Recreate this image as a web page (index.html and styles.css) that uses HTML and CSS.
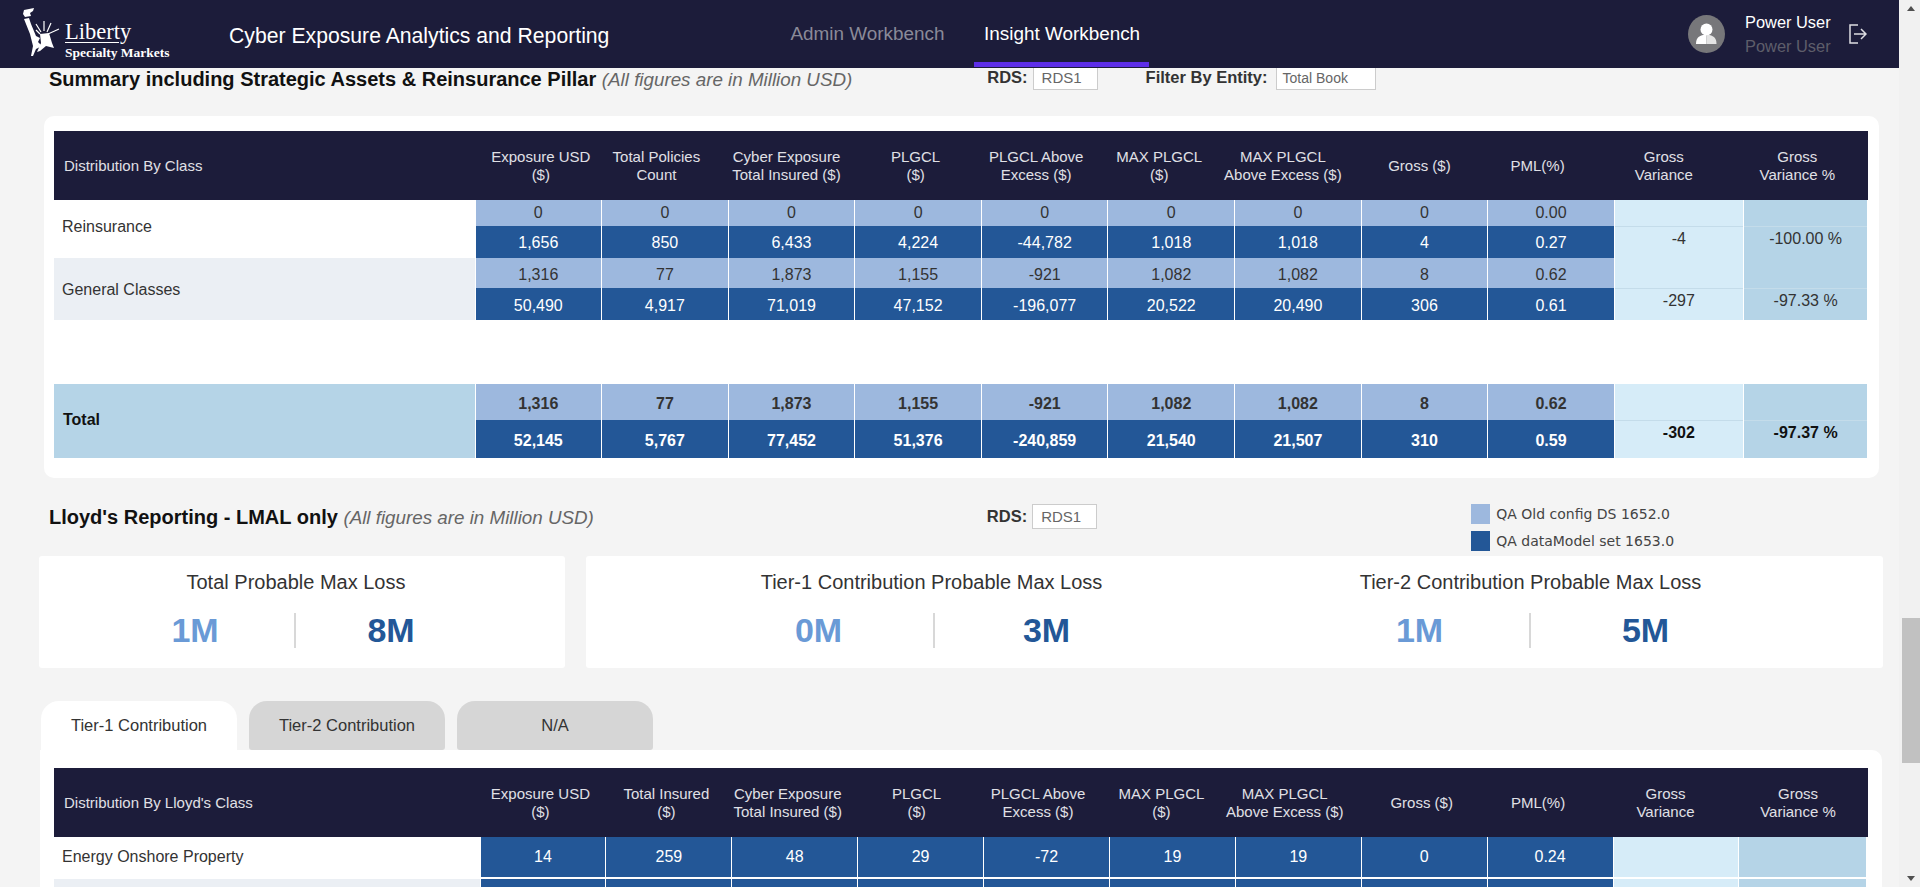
FILE: index.html
```html
<!doctype html>
<html lang="en">
  <head>
    <meta charset="UTF-8" />
    <meta name="viewport" content="width=device-width, initial-scale=1.0" />
    <link rel="stylesheet" href="styles.css">
    <title>Cyber Exposure Analytics and Reporting</title>
  </head>
  <body>
    <div class="shell">
      <div class="page">
        <header class="topbar">
          <div class="logo">
            <svg class="logo-statue" viewBox="0 0 38 50" width="38" height="50">
              <path fill="#fff" d="M2 2L12 0L11 3L8 5L9 8L3 9L1 6Z"/>
              <path fill="#fff" d="M2 11L7 10L9 16L14 28L18 30L16 34L20 38L14 41L11 48L9 48L11 38L8 26Z"/>
              <path fill="#fff" d="M18 26L27 25L30 35L32 40L24 38L18 43L15 44L19 35Z"/>
              <path stroke="#fff" stroke-width="1.2" d="M22 23L22 13M19 24L14 16M25 24L29 15M26 26L37 21M18 26L14 22"/>
            </svg>
            <div class="logo-words">
              <span class="logo-name">Liberty</span>
              <span class="logo-sub">Specialty Markets</span>
            </div>
          </div>
          <div class="app-title">Cyber Exposure Analytics and Reporting</div>
          <nav class="nav">
            <a class="nav-item">Admin Workbench</a>
            <a class="nav-item active">Insight Workbench</a>
          </nav>
          <div class="user">
            <span class="avatar">
              <svg viewBox="0 0 37 38" width="37" height="38">
                <circle cx="18.500" cy="14.500" r="6" fill="#fff"/>
                <path fill="#fff" d="M8 29c0-5 2-8 7-9h3.500v9z"/>
                <path fill="#e4e4e4" d="M28.500 29c0-5-2-8-7-9h-3v9z"/>
              </svg>
            </span>
            <div class="user-names">
              <span class="user-name">Power User</span>
              <span class="user-role">Power User</span>
            </div>
            <svg class="logout" viewBox="0 0 18 20" width="18" height="20" fill="none" stroke="#dddde2" stroke-width="1.500">
              <path d="M9 1H1v18h8"/>
              <path d="M5 10h12M12 5l5 5-5 5"/>
            </svg>
          </div>
        </header>

        <main class="content">
          <section class="title-row first">
            <h2 class="heading">Summary including Strategic Assets &amp; Reinsurance Pillar <em>(All figures are in Million USD)</em></h2>
            <div class="filter rds-filter"><b>RDS:</b><span class="box rds-box">RDS1</span></div>
            <div class="filter entity-filter"><b>Filter By Entity:</b><span class="box entity-box">Total Book</span></div>
          </section>

          <section class="card summary-card">
            <table class="grid summary">
              <colgroup>
                <col class="c-label"><col span="9" class="c-num"><col class="c-var"><col class="c-varp">
              </colgroup>
              <thead>
                <tr>
                  <th>Distribution By Class</th>
                  <th><span>Exposure USD<br>($)</span></th><th><span>Total Policies<br>Count</span></th><th><span>Cyber Exposure<br>Total Insured ($)</span></th><th><span>PLGCL<br>($)</span></th>
                  <th><span>PLGCL Above<br>Excess ($)</span></th><th><span>MAX PLGCL<br>($)</span></th><th><span>MAX PLGCL<br>Above Excess ($)</span></th><th><span>Gross ($)</span></th><th><span>PML(%)</span></th>
                  <th><span>Gross<br>Variance</span></th><th><span>Gross<br>Variance %</span></th>
                </tr>
              </thead>
              <tbody>
                <tr class="old">
                  <td rowspan="2" class="label">Reinsurance</td>
                  <td>0</td><td>0</td><td>0</td><td>0</td><td>0</td><td>0</td><td>0</td><td>0</td><td>0.00</td>
                  <td class="var"></td><td class="varp"></td>
                </tr>
                <tr class="new">
                  <td>1,656</td><td>850</td><td>6,433</td><td>4,224</td><td>-44,782</td><td>1,018</td><td>1,018</td><td>4</td><td>0.27</td>
                  <td class="var">-4</td><td class="varp">-100.00 %</td>
                </tr>
                <tr class="old tall">
                  <td rowspan="2" class="label alt">General Classes</td>
                  <td>1,316</td><td>77</td><td>1,873</td><td>1,155</td><td>-921</td><td>1,082</td><td>1,082</td><td>8</td><td>0.62</td>
                  <td class="var"></td><td class="varp"></td>
                </tr>
                <tr class="new low">
                  <td>50,490</td><td>4,917</td><td>71,019</td><td>47,152</td><td>-196,077</td><td>20,522</td><td>20,490</td><td>306</td><td>0.61</td>
                  <td class="var">-297</td><td class="varp">-97.33 %</td>
                </tr>
                <tr class="spacer"><td colspan="12"></td></tr>
                <tr class="old total">
                  <td rowspan="2" class="label total-label">Total</td>
                  <td>1,316</td><td>77</td><td>1,873</td><td>1,155</td><td>-921</td><td>1,082</td><td>1,082</td><td>8</td><td>0.62</td>
                  <td class="var"></td><td class="varp"></td>
                </tr>
                <tr class="new total">
                  <td>52,145</td><td>5,767</td><td>77,452</td><td>51,376</td><td>-240,859</td><td>21,540</td><td>21,507</td><td>310</td><td>0.59</td>
                  <td class="var">-302</td><td class="varp">-97.37 %</td>
                </tr>
              </tbody>
            </table>
          </section>

          <section class="title-row second">
            <h2 class="heading">Lloyd's Reporting - LMAL only <em>(All figures are in Million USD)</em></h2>
            <div class="filter rds-filter-two"><b>RDS:</b><span class="box rds-box">RDS1</span></div>
            <div class="legend">
              <div class="legend-item"><i class="swatch light"></i>QA Old config DS 1652.0</div>
              <div class="legend-item"><i class="swatch dark"></i>QA dataModel set 1653.0</div>
            </div>
          </section>

          <section class="kpis">
            <div class="kpi-card kpi-total">
              <div class="kpi">
                <div class="kpi-title">Total Probable Max Loss</div>
                <div class="kpi-values"><span class="v-old">1M</span><span class="v-new">8M</span></div>
              </div>
            </div>
            <div class="kpi-card kpi-tiers">
              <div class="kpi tier-one">
                <div class="kpi-title">Tier-1 Contribution Probable Max Loss</div>
                <div class="kpi-values"><span class="v-old">0M</span><span class="v-new">3M</span></div>
              </div>
              <div class="kpi tier-two">
                <div class="kpi-title">Tier-2 Contribution Probable Max Loss</div>
                <div class="kpi-values"><span class="v-old">1M</span><span class="v-new">5M</span></div>
              </div>
            </div>
          </section>

          <div class="tabs">
            <div class="tab active">Tier-1 Contribution</div>
            <div class="tab">Tier-2 Contribution</div>
            <div class="tab">N/A</div>
          </div>

          <section class="card lloyds-card">
            <table class="grid lloyds">
              <colgroup>
                <col class="c-label"><col span="9" class="c-num"><col class="c-var"><col class="c-varp">
              </colgroup>
              <thead>
                <tr>
                  <th>Distribution By Lloyd's Class</th>
                  <th><span>Exposure USD<br>($)</span></th><th><span>Total Insured<br>($)</span></th><th><span>Cyber Exposure<br>Total Insured ($)</span></th><th><span>PLGCL<br>($)</span></th>
                  <th><span>PLGCL Above<br>Excess ($)</span></th><th><span>MAX PLGCL<br>($)</span></th><th><span>MAX PLGCL<br>Above Excess ($)</span></th><th><span>Gross ($)</span></th><th><span>PML(%)</span></th>
                  <th><span>Gross<br>Variance</span></th><th><span>Gross<br>Variance %</span></th>
                </tr>
              </thead>
              <tbody>
                <tr class="new single">
                  <td class="label">Energy Onshore Property</td>
                  <td>14</td><td>259</td><td>48</td><td>29</td><td>-72</td><td>19</td><td>19</td><td>0</td><td>0.24</td>
                  <td class="var"></td><td class="varp"></td>
                </tr>
                <tr class="new single">
                  <td class="label alt"></td>
                  <td></td><td></td><td></td><td></td><td></td><td></td><td></td><td></td><td></td>
                  <td class="var"></td><td class="varp"></td>
                </tr>
              </tbody>
            </table>
          </section>
        </main>
      </div>

      <div class="scrollbar">
        <span class="arrow up"></span>
        <div class="track"><div class="thumb"></div></div>
        <span class="arrow down"></span>
      </div>
    </div>
  </body>
</html>
```
FILE: styles.css
```css
* {
  box-sizing: border-box;
}

html, body {
  height: 100%;
  margin: 0;
  overflow: hidden;
}

body {
  font-family: "Liberation Sans", Arial, sans-serif;
  background: #f4f4f4;
  color: #222;
}

.shell {
  display: flex;
  height: 887px;
}

.page {
  width: 1899px;
  height: 887px;
  overflow: hidden;
  flex: none;
  display: flex;
  flex-direction: column;
}

/* top bar */
.topbar {
  flex: none;
  height: 68px;
  background: #1c1c3a;
  display: flex;
  align-items: center;
  color: #fff;
  position: relative;
  z-index: 2;
}

.logo {
  width: 229px;
  height: 68px;
  padding-left: 22px;
  display: flex;
  align-items: flex-start;
  flex: none;
}

.logo-statue {
  flex: none;
  margin: 8px 5px 0 0;
}

.logo-words {
  display: flex;
  flex-direction: column;
  font-family: "Liberation Serif", serif;
  margin-top: 22px;
}

.logo-name {
  font-size: 22.5px;
  line-height: 19px;
  border-bottom: 1px solid #fff;
  width: 54px;
  padding-bottom: 1px;
  white-space: nowrap;
}

.logo-sub {
  font-size: 13.5px;
  font-weight: bold;
  line-height: 18px;
  padding-top: 1px;
  white-space: nowrap;
}

.app-title {
  font-size: 21.2px;
  width: 551px;
  flex: none;
  padding-top: 3px;
}

.nav {
  display: flex;
  align-self: stretch;
  flex: none;
  width: 908px;
}

.nav-item {
  font-size: 18.9px;
  color: #8a8a98;
  padding: 0 10px;
  margin-right: 19px;
  height: 67px;
  line-height: 68px;
  width: 175px;
  text-align: center;
  white-space: nowrap;
}

.nav-item.active {
  color: #fff;
  border-bottom: 5px solid #5d2ee8;
}

.user {
  display: flex;
  align-items: center;
}

.avatar {
  width: 37px;
  height: 38px;
  background: #77777a;
  border-radius: 50%;
  margin-right: 20px;
  overflow: hidden;
}

.avatar svg {
  display: block;
}

.user-names {
  display: flex;
  flex-direction: column;
  font-size: 16.4px;
  line-height: 24px;
}

.user-role {
  color: #5e5e6a;
}

.logout {
  margin-left: 18px;
}

/* scrollbar strip */
.scrollbar {
  flex: 1;
  background: #f1f1f1;
  display: flex;
  flex-direction: column;
  align-items: flex-end;
}

.arrow {
  width: 18px;
  height: 17px;
  display: flex;
  align-items: center;
  justify-content: center;
}

.arrow::before {
  content: "";
  border-left: 4px solid transparent;
  border-right: 4px solid transparent;
}

.arrow.up::before {
  border-bottom: 5px solid #505050;
}

.arrow.down::before {
  border-top: 5px solid #505050;
}

.track {
  flex: 1;
  width: 18px;
}

.thumb {
  margin-top: 601px;
  height: 145px;
  background: #c1c1c1;
}

/* content */
.content {
  flex: 1;
  min-height: 0;
  overflow: hidden;
}

.title-row {
  display: flex;
  align-items: center;
}

.title-row.first {
  height: 25px;
  margin-top: -3px;
  padding-left: 49px;
}

.title-row.second {
  height: 34px;
  margin-top: 21px;
  padding-left: 49px;
}

.heading {
  margin: 0;
  padding-top: 4px;
  font-size: 20px;
  font-weight: bold;
  color: #111;
  white-space: nowrap;
}

.second .heading {
  padding-top: 2px;
}

.heading em {
  font-weight: normal;
  font-size: 18.8px;
  color: #666;
}

.filter {
  font-size: 16.5px;
  display: flex;
  align-items: center;
  color: #333;
  white-space: nowrap;
}

.filter b {
  margin-right: 5px;
}

.rds-filter {
  margin-left: 135px;
}

.entity-filter {
  margin-left: 48px;
}

.entity-filter b {
  margin-right: 8px;
}

.rds-filter-two {
  margin-left: 393px;
}

.box {
  display: block;
  height: 25px;
  line-height: 24px;
  background: #fff;
  border: 1px solid #ccc;
  color: #666;
  padding-left: 6px;
}

.rds-box {
  width: 65px;
  font-size: 15px;
  padding-left: 8px;
}

.entity-box {
  width: 100px;
  font-size: 14px;
}

.legend {
  align-self: flex-start;
  margin: 1px 0 0 374px;
  font-family: "DejaVu Sans", sans-serif;
  font-size: 14px;
  color: #444;
  white-space: nowrap;
}

.legend-item {
  display: flex;
  align-items: center;
  height: 27px;
}

.swatch {
  width: 19px;
  height: 20px;
  margin-right: 6px;
}

.swatch.light {
  background: #9db8de;
}

.swatch.dark {
  background: #235797;
}

.card {
  background: #fff;
  border-radius: 10px;
}

.summary-card {
  margin: 26px 20px 0 44px;
  height: 362px;
  padding: 15px 0 0 10px;
}

.grid {
  border-collapse: collapse;
  table-layout: fixed;
  width: 1814px;
}

.grid th {
  background: #1c1c3a;
  color: #e0e0e6;
  font-size: 15px;
  font-weight: normal;
  line-height: 18px;
  text-align: center;
  padding: 0;
  height: 69px;
  white-space: nowrap;
}

.grid th:first-child {
  text-align: left;
  padding-left: 10px;
}

.grid th span {
  display: block;
  margin: 0 var(--shift) 0 calc(0px - var(--shift));
}

/* the header labels do not sit quite over their columns */
.summary th:nth-child(2) { --shift: -2.5px; }
.summary th:nth-child(3) { --shift: 8.5px; }
.summary th:nth-child(4) { --shift: 5px; }
.summary th:nth-child(5) { --shift: 2.5px; }
.summary th:nth-child(6) { --shift: 8.5px; }
.summary th:nth-child(7) { --shift: 12px; }
.summary th:nth-child(8) { --shift: 15px; }
.summary th:nth-child(9) { --shift: 5px; }
.summary th:nth-child(10) { --shift: 13.5px; }
.summary th:nth-child(11) { --shift: 15px; }
.summary th:nth-child(12) { --shift: 8.5px; }

.lloyds th:nth-child(2) { --shift: 2.5px; }
.lloyds th:nth-child(3) { --shift: 2.5px; }
.lloyds th:nth-child(4) { --shift: 7px; }
.lloyds th:nth-child(5) { --shift: 4px; }
.lloyds th:nth-child(6) { --shift: 8.5px; }
.lloyds th:nth-child(7) { --shift: 11px; }
.lloyds th:nth-child(8) { --shift: 13.5px; }
.lloyds th:nth-child(9) { --shift: 2.5px; }
.lloyds th:nth-child(10) { --shift: 12px; }
.lloyds th:nth-child(11) { --shift: 10px; }
.lloyds th:nth-child(12) { --shift: 5px; }

.grid td {
  text-align: center;
  font-size: 16px;
  padding: 0;
  border-left: 1px solid #fff;
}

.summary .c-label {
  width: 421px;
}

.summary .c-num {
  width: 126.6px;
}

.summary .c-var {
  width: 129px;
}

.summary .c-varp {
  width: 125px;
}

.lloyds .c-label {
  width: 426px;
}

.lloyds .c-num {
  width: 125.9px;
}

.lloyds .c-var {
  width: 125px;
}

.lloyds .c-varp {
  width: 130px;
}

.grid td.label {
  text-align: left;
  padding: 0 0 5px 8px;
  background: #fff;
  border: 0;
  color: #333;
}

.grid td.alt {
  background: #ebeff4;
  padding-bottom: 1px;
}

.old td {
  background: #9db8de;
  color: #333;
  height: 26px;
}

.old.tall td {
  height: 30px;
  padding-top: 3px;
}

.new td {
  background: #235797;
  color: #fff;
  height: 32px;
  padding-top: 2px;
}

.new.low td {
  padding-top: 4px;
}

.grid td.var {
  background: #d6ecf8;
  color: #333;
  padding: 0 0 6px;
}

.grid td.varp {
  background: #b5d4e7;
  color: #333;
  padding: 0 0 6px;
  border-right: 2px solid #fff;
}

.new td.var,
.new td.varp {
  border-top: 1px solid #c4dcea;
}

.spacer td {
  height: 64px;
  background: #fff;
  border: 0;
}

.total td {
  font-weight: bold;
}

.old.total td {
  height: 36px;
  padding-top: 3px;
}

.new.total td {
  height: 38px;
  padding-top: 3px;
}

.grid .total td.var,
.grid .total td.varp {
  padding: 0 0 12px;
  color: #111;
}

.grid td.total-label {
  background: #b5d4e7;
  font-weight: bold;
  color: #111;
  padding: 0 0 2px 9px;
}

/* kpi cards */
.kpis {
  display: flex;
  margin: 23px 16px 0 39px;
  gap: 21px;
  height: 112px;
}

.kpi-card {
  background: #fff;
  border-radius: 3px;
  display: flex;
}

.kpi-total {
  width: 526px;
  flex: none;
  padding-right: 12px;
}

.kpi-tiers {
  flex: 1;
  padding-left: 46px;
}

.kpi {
  flex: 1;
  text-align: center;
  padding-top: 14px;
}

.kpi-tiers .kpi {
  flex: none;
  width: 599px;
}

.kpi-title {
  font-size: 20px;
  line-height: 24px;
  color: #333;
}

.kpi-values {
  display: flex;
  justify-content: center;
  margin-top: 19px;
  font-size: 34px;
  font-weight: bold;
  line-height: 35px;
}

.kpi-values span {
  width: 200px;
}

.kpi-tiers .kpi-values span {
  width: 230px;
}

.kpi-total .v-new {
  padding-right: 10px;
}

.tier-one .kpi-values {
  margin-left: 6px;
}

.tier-one .v-new {
  padding-right: 6px;
}

.tier-two .v-old {
  padding-left: 10px;
}

.v-old {
  color: #6a9ad6;
  border-right: 2px solid #d8d8d8;
}

.v-new {
  color: #235797;
}

/* tabs */
.tabs {
  display: flex;
  gap: 12px;
  margin: 33px 0 0 41px;
  height: 49px;
}

.tab {
  width: 196px;
  background: #d6d6d6;
  border-radius: 18px 18px 3px 3px;
  text-align: center;
  font-size: 16.5px;
  line-height: 49px;
  color: #333;
}

.tab.active {
  background: #fff;
  border-radius: 18px 18px 0 0;
}

.lloyds-card {
  margin: 0 17px 0 40px;
  height: 400px;
  padding: 18px 0 0 14px;
  border-top-left-radius: 0;
}

.new.single td {
  height: 41px;
  border-bottom: 2px solid #fff;
  padding: 0;
}

.grid .new.single td.var,
.grid .new.single td.varp {
  border-top: 0;
  padding: 0;
}

.grid .new.single td.varp {
  border-right: 4px solid #fff;
}

.grid .new.single td.label {
  padding: 0 0 0 8px;
  border-bottom: 2px solid #fff;
}
```
